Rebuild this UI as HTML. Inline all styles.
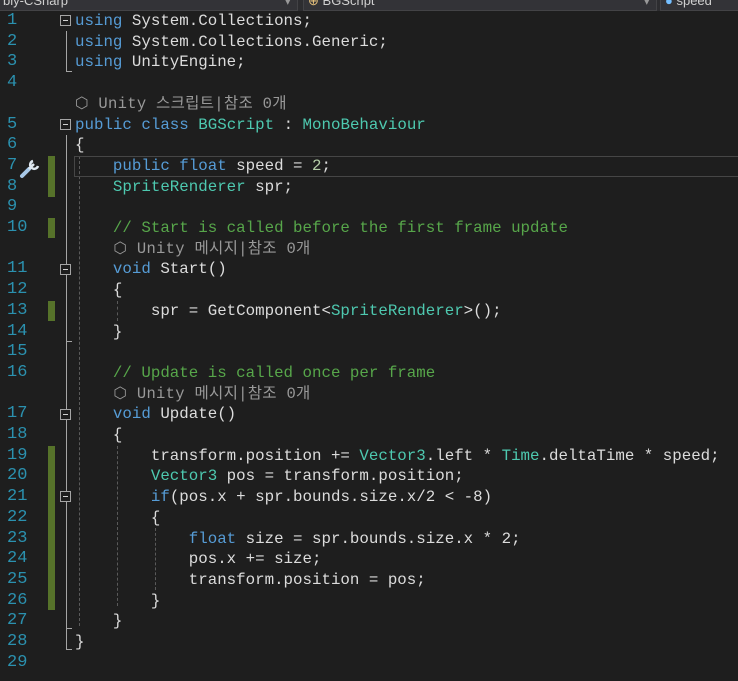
<!DOCTYPE html>
<html><head><meta charset="utf-8"><style>
body{margin:0;width:738px;height:681px;background:#1e1e1e;overflow:hidden;position:relative;font-family:"Liberation Mono","Noto Sans CJK KR",monospace;}
.top{position:absolute;left:0;top:0;width:738px;height:11px;background:#2d2d30;}
.dd{position:absolute;top:-6px;height:15px;background:#333337;border:1px solid #434346;color:#d0d0d0;font:13px "Liberation Sans",sans-serif;line-height:12px;padding-left:4px;overflow:hidden}
.r{position:absolute;left:0;height:20.7px;line-height:20.7px;font-size:15.8px;white-space:pre;color:#dcdcdc}
.n{position:absolute;left:7px;color:#2b91af;font-size:17px}
.c{position:absolute;left:75px}
.k{color:#569cd6}.t{color:#4ec9b0}.m{color:#57a64a}.num{color:#b5cea8}.cl{color:#999;font-size:15.5px;letter-spacing:0.3px}
.g{position:absolute;left:48px;width:7px;background:#56722a}
.vl{position:absolute;left:66px;width:1px;background:#a5a5a5}
.dg{position:absolute;width:0;border-left:1px dashed #5a5a5a}
.fb{position:absolute;left:60px;width:9px;height:9px;border:1px solid #a5a5a5;background:#1e1e1e}
.fb:after{content:"";position:absolute;left:2px;top:4px;width:5px;height:1px;background:#d0d0d0}
.hk{position:absolute;left:66px;width:6px;height:0;border-top:1px solid #a5a5a5}
</style></head><body>
<div class="top"></div>
<div class="dd" style="left:-2px;width:294px">bly-CSharp<span style="position:absolute;right:6px;color:#999">▾</span></div>
<div class="dd" style="left:303px;width:348px"><span style="color:#e5c07b">⊕</span> BGScript<span style="position:absolute;right:6px;color:#999">▾</span></div>
<div class="dd" style="left:660px;width:80px"><span style="color:#75bfff">●</span> speed</div>

<div class="g" style="top:156px;height:41px"></div>
<div class="g" style="top:218px;height:20px"></div>
<div class="g" style="top:301px;height:20px"></div>
<div class="g" style="top:446px;height:164px"></div>

<div class="vl" style="top:31px;height:40px"></div><div class="hk" style="top:71px"></div>
<div class="vl" style="top:135px;height:514px"></div><div class="hk" style="top:649px"></div>
<div class="hk" style="top:341px"></div><div class="hk" style="top:628px"></div>
<div class="dg" style="left:79px;top:156px;height:470px"></div>
<div class="dg" style="left:117px;top:301px;height:20px"></div>
<div class="dg" style="left:117px;top:446px;height:160px"></div>
<div class="dg" style="left:155px;top:528px;height:62px"></div>
<div class="fb" style="left:60px;top:15px"></div>
<div class="fb" style="left:60px;top:119px"></div>
<div class="fb" style="left:60px;top:264px"></div>
<div class="fb" style="left:60px;top:409px"></div>
<div class="fb" style="left:60px;top:491px"></div>

<div style="position:absolute;left:74px;top:156px;width:680px;height:19px;border:1px solid #464646"></div>
<svg style="position:absolute;left:19px;top:156px" width="24" height="24" viewBox="0 0 24 24"><path d="M3 20 L10 13" stroke="#a8c8e8" stroke-width="4" stroke-linecap="round"/><path d="M10 13 L15 8 M14 5 a4 4 0 1 0 5 5" stroke="#dfe8f0" stroke-width="2.5" fill="none"/></svg>

<div class="r" style="top:11px"><span class="n">1</span><span class="c"><span class="k">using</span> System.Collections;</span></div>
<div class="r" style="top:31.7px"><span class="n">2</span><span class="c"><span class="k">using</span> System.Collections.Generic;</span></div>
<div class="r" style="top:52.4px"><span class="n">3</span><span class="c"><span class="k">using</span> UnityEngine;</span></div>
<div class="r" style="top:73.1px"><span class="n">4</span></div>
<div class="r" style="top:93.8px"><span class="c cl">⬡ Unity 스크립트|참조 0개</span></div>
<div class="r" style="top:114.5px"><span class="n">5</span><span class="c"><span class="k">public class</span> <span class="t">BGScript</span> : <span class="t">MonoBehaviour</span></span></div>
<div class="r" style="top:135.2px"><span class="n">6</span><span class="c">{</span></div>
<div class="r" style="top:155.9px"><span class="n">7</span><span class="c">    <span class="k">public float</span> speed = <span class="num">2</span>;</span></div>
<div class="r" style="top:176.6px"><span class="n">8</span><span class="c">    <span class="t">SpriteRenderer</span> spr;</span></div>
<div class="r" style="top:197.3px"><span class="n">9</span></div>
<div class="r" style="top:218px"><span class="n">10</span><span class="c">    <span class="m">// Start is called before the first frame update</span></span></div>
<div class="r" style="top:238.7px"><span class="c cl">    ⬡ Unity 메시지|참조 0개</span></div>
<div class="r" style="top:259.4px"><span class="n">11</span><span class="c">    <span class="k">void</span> Start()</span></div>
<div class="r" style="top:280.1px"><span class="n">12</span><span class="c">    {</span></div>
<div class="r" style="top:300.8px"><span class="n">13</span><span class="c">        spr = GetComponent&lt;<span class="t">SpriteRenderer</span>&gt;();</span></div>
<div class="r" style="top:321.5px"><span class="n">14</span><span class="c">    }</span></div>
<div class="r" style="top:342.2px"><span class="n">15</span></div>
<div class="r" style="top:362.9px"><span class="n">16</span><span class="c">    <span class="m">// Update is called once per frame</span></span></div>
<div class="r" style="top:383.6px"><span class="c cl">    ⬡ Unity 메시지|참조 0개</span></div>
<div class="r" style="top:404.3px"><span class="n">17</span><span class="c">    <span class="k">void</span> Update()</span></div>
<div class="r" style="top:425px"><span class="n">18</span><span class="c">    {</span></div>
<div class="r" style="top:445.7px"><span class="n">19</span><span class="c">        transform.position += <span class="t">Vector3</span>.left * <span class="t">Time</span>.deltaTime * speed;</span></div>
<div class="r" style="top:466.4px"><span class="n">20</span><span class="c">        <span class="t">Vector3</span> pos = transform.position;</span></div>
<div class="r" style="top:487.1px"><span class="n">21</span><span class="c">        <span class="k">if</span>(pos.x + spr.bounds.size.x/2 &lt; -8)</span></div>
<div class="r" style="top:507.8px"><span class="n">22</span><span class="c">        {</span></div>
<div class="r" style="top:528.5px"><span class="n">23</span><span class="c">            <span class="k">float</span> size = spr.bounds.size.x * 2;</span></div>
<div class="r" style="top:549.2px"><span class="n">24</span><span class="c">            pos.x += size;</span></div>
<div class="r" style="top:569.9px"><span class="n">25</span><span class="c">            transform.position = pos;</span></div>
<div class="r" style="top:590.6px"><span class="n">26</span><span class="c">        }</span></div>
<div class="r" style="top:611.3px"><span class="n">27</span><span class="c">    }</span></div>
<div class="r" style="top:632px"><span class="n">28</span><span class="c">}</span></div>
<div class="r" style="top:652.7px"><span class="n">29</span></div>
</body></html>
